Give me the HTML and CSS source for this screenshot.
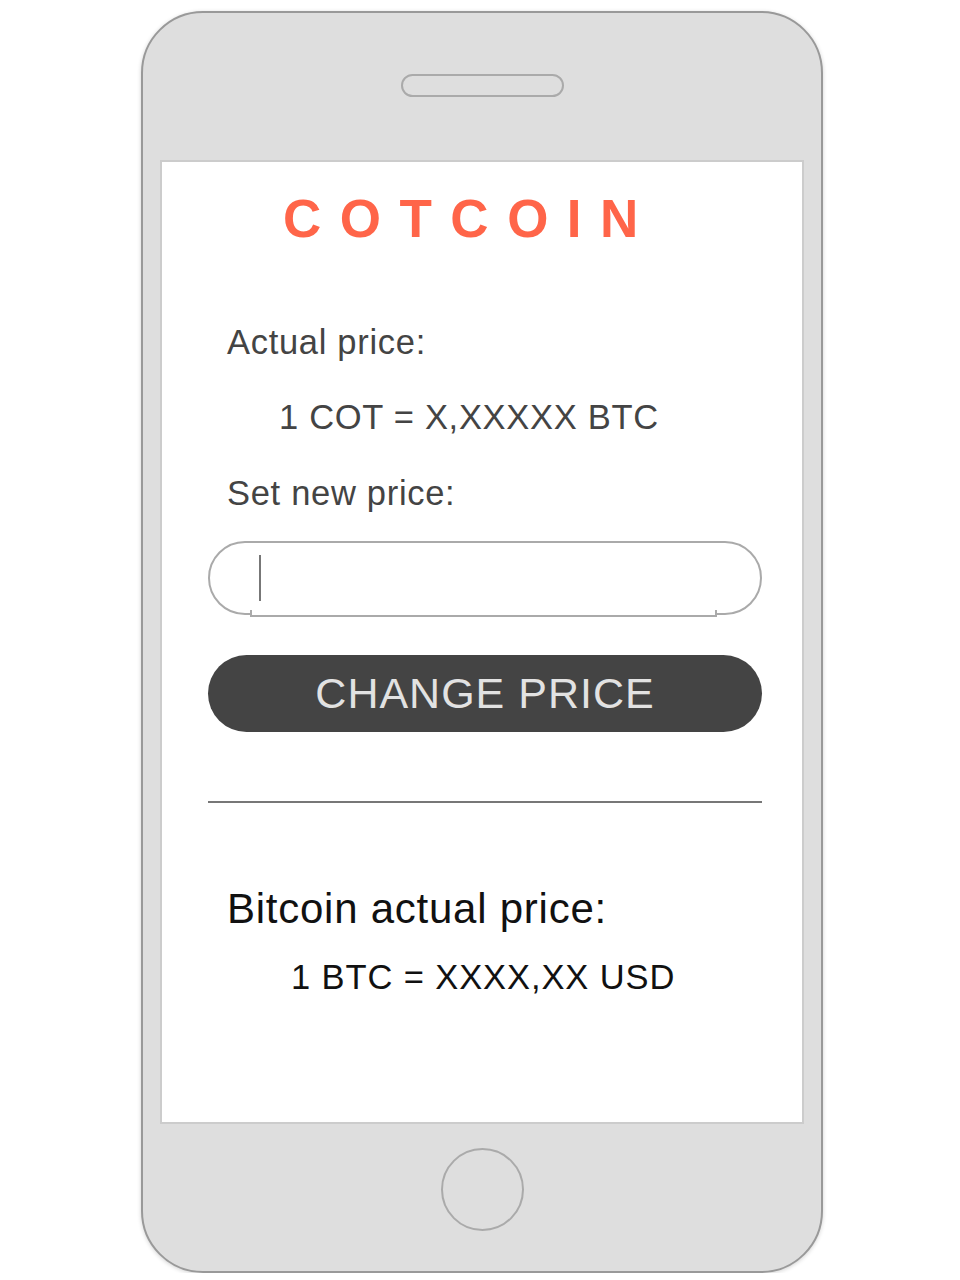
FILE: index.html
```html
<!DOCTYPE html>
<html lang="en">
<head>
<meta charset="utf-8">
<title>Cotcoin</title>
<link rel="stylesheet" href="styles.css">
</head>
<body>
<div class="phone">
  <div class="speaker"></div>
  <div class="screen">
    <h1 class="brand">COTCOIN</h1>
    <p class="label label-actual">Actual price:</p>
    <p class="rate rate-cot">1 COT = X,XXXXX BTC</p>
    <p class="label label-set">Set new price:</p>
    <div class="field"><span class="caret"></span></div>
    <button class="btn" type="button">CHANGE PRICE</button>
    <hr class="divider">
    <p class="heading">Bitcoin actual price:</p>
    <p class="rate rate-btc">1 BTC = XXXX,XX USD</p>
  </div>
  <div class="home"></div>
</div>
</body>
</html>
```

FILE: styles.css
```css
* { box-sizing: border-box; }

body {
  margin: 0;
  background: #ffffff;
  font-family: "Liberation Sans", Arial, sans-serif;
}

.phone {
  margin: 11px 0 0 141px;
  width: 682px;
  height: 1262px;
  border: 2px solid #999999;
  border-radius: 62px;
  background: #dedede;
  box-shadow: 0 1px 4px rgba(0, 0, 0, 0.18);
  display: flex;
  flex-direction: column;
  align-items: center;
}

.speaker {
  margin-top: 61px;
  width: 163px;
  height: 23px;
  border: 2px solid #aaaaaa;
  border-radius: 12px;
}

.screen {
  margin-top: 63px;
  width: 644px;
  height: 964px;
  border: 2px solid #cccccc;
  background: #ffffff;
  display: flex;
  flex-direction: column;
  align-items: flex-start;
}

.home {
  margin-top: 24px;
  width: 83px;
  height: 83px;
  border: 2px solid #aaaaaa;
  border-radius: 50%;
}

.brand {
  margin: 27px 0 0 121px;
  font-size: 53px;
  line-height: 60px;
  font-weight: bold;
  letter-spacing: 18.5px;
  color: #ff6549;
}

.label,
.rate,
.heading {
  margin: 0;
  font-size: 34.5px;
  line-height: 40px;
  letter-spacing: 0.7px;
  color: #444444;
  white-space: nowrap;
}

.label-actual { margin: 73px 0 0 65px; }
.rate-cot { margin: 35px 0 0 117px; }
.label-set { margin: 36px 0 0 65px; }

.field {
  position: relative;
  margin: 28px 0 0 46px;
  width: 554px;
  height: 74px;
  border: 2px solid #aaaaaa;
  border-radius: 37px;
  background: #ffffff;
  display: flex;
  align-items: center;
  padding-left: 49px;
}

.field::after {
  content: "";
  position: absolute;
  left: 40px;
  right: 43px;
  bottom: -4px;
  height: 5px;
  background: #ffffff;
  border: 2px solid #aaaaaa;
  border-top: none;
}

.caret {
  width: 2px;
  height: 46px;
  background: #777777;
}

.btn {
  margin: 40px 0 0 46px;
  width: 554px;
  height: 77px;
  border: none;
  border-radius: 39px;
  background: #444444;
  color: #e2e2e2;
  font-family: "Liberation Sans", Arial, sans-serif;
  font-size: 43px;
  letter-spacing: 1px;
  padding: 0;
}

.divider {
  margin: 69px 0 0 46px;
  width: 554px;
  height: 2px;
  border: none;
  background: #777777;
}

.heading {
  margin: 82px 0 0 65px;
  font-size: 42px;
  line-height: 48px;
  letter-spacing: 0.75px;
  color: #111111;
}

.rate-btc {
  margin: 24px 0 0 129px;
  color: #111111;
  letter-spacing: 0.9px;
}
```
